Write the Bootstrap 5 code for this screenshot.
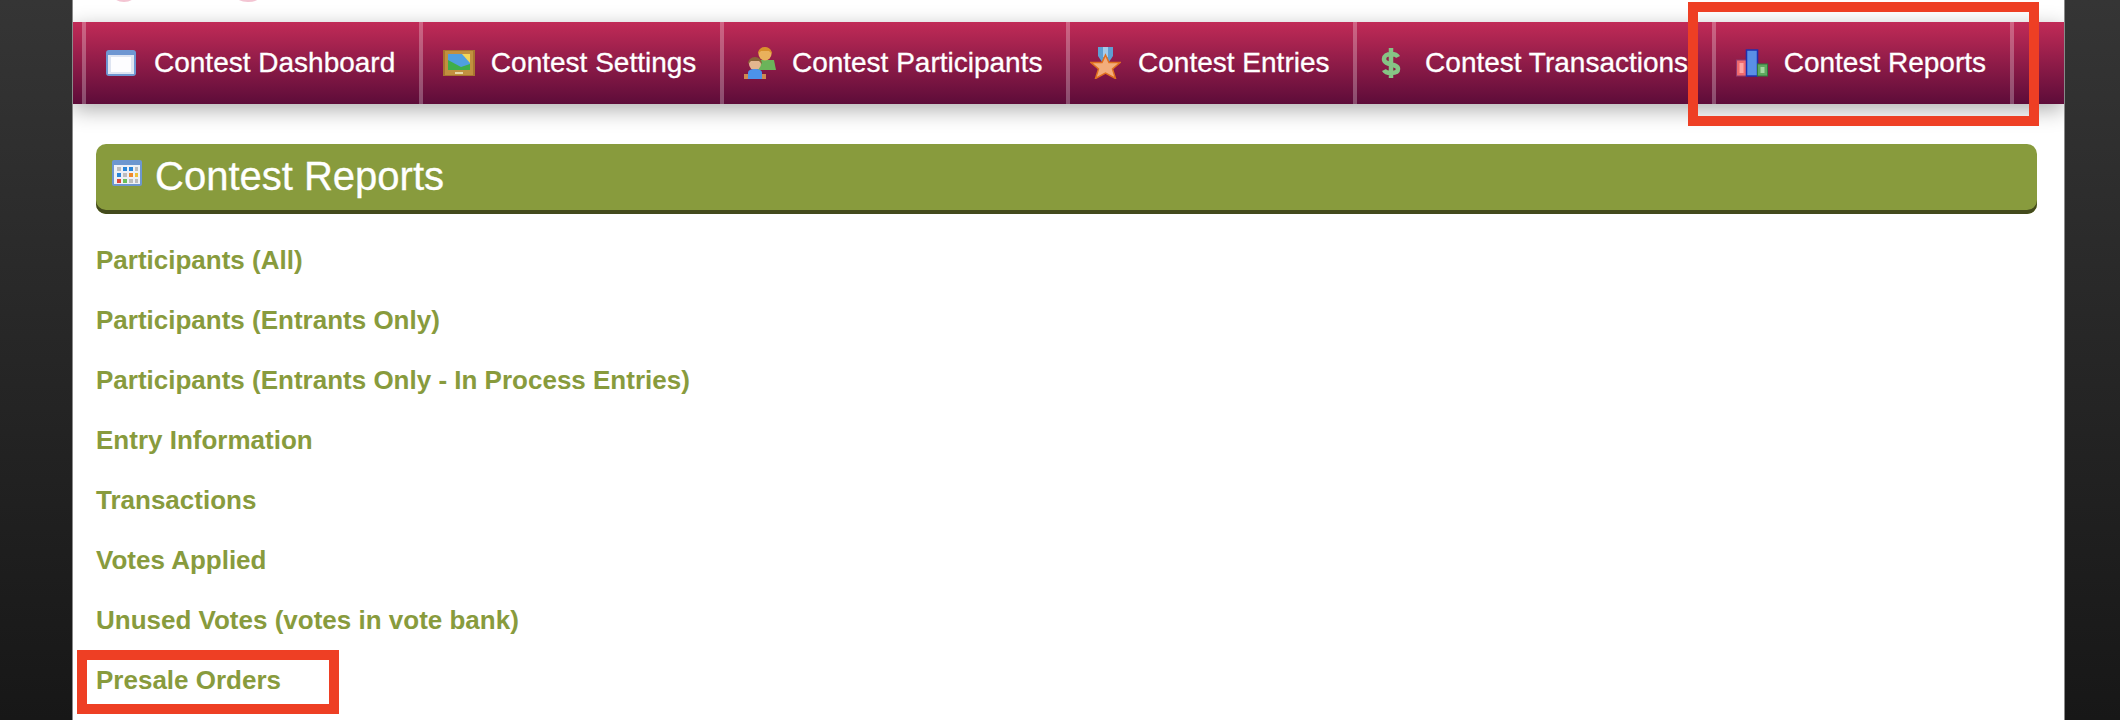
<!DOCTYPE html>
<html lang="en">
<head>
<meta charset="utf-8">
<title>Contest Reports</title>
<link href="https://cdn.jsdelivr.net/npm/bootstrap@5.3.0/dist/css/bootstrap.min.css" rel="stylesheet">
<style>
html,body{height:720px;overflow:hidden}
body{background:linear-gradient(#353535,#171717);font-family:"Liberation Sans",Arial,sans-serif;position:relative}
.sheet{margin-left:72px;width:1993px;height:720px;background:#fff;border-left:1px solid #8a8a8a;border-right:1px solid #8a8a8a;position:relative;overflow:hidden}
.logo-bit{position:absolute;top:-11px;height:13px;border-radius:50%;border:2px solid #f3c4d2;background:#fbe6ec}
.logo-a{left:40px;width:22px}
.logo-b{left:162px;width:26px}
.topband{height:22px}
.mainbar{height:82px;padding-left:9px;background:linear-gradient(#c12b57,#5d0c39);box-shadow:0 6px 20px rgba(0,0,0,.32)}
.mainbar-item{border-left:4px solid rgba(255,255,255,.27);padding:0 23.6px 0 20px;color:#fff;font-size:28px;white-space:nowrap;text-decoration:none;-webkit-text-stroke:.3px #fff}
.mainbar-item:last-child{border-right:4px solid rgba(255,255,255,.27)}
.mainbar-item:hover{color:#fff}
.ico-slot{width:48px;flex:none;display:flex;align-items:center}
.pagehead{margin:40px 27px 0 23px;height:70px;padding-bottom:4px;background:#889b3d;border-radius:10px;box-shadow:inset 0 -4px 0 #434a1c;color:#fff}
.pagehead h1{font-size:40px;font-weight:400;margin:0;line-height:64px;-webkit-text-stroke:.3px #fff}
.head-ico{margin:16px 13px 0 16px;flex:none}
.rep-links{margin:0 0 0 23px;padding:16px 0 0;list-style:none}
.rep-links li{height:60px;line-height:60px}
.rep-links a{color:#889b3d;font-weight:700;font-size:26px;text-decoration:none}
.callout{position:absolute;border:10px solid #ee3f24;pointer-events:none}
.callout-nav{left:1615px;top:2px;width:351px;height:124px}
.callout-list{left:4px;top:650px;width:262px;height:64px}
</style>
</head>
<body>
<div class="sheet">
  <span class="logo-bit logo-a"></span><span class="logo-bit logo-b"></span>
  <div class="topband"></div>
  <nav class="mainbar d-flex">
    <a class="mainbar-item d-flex align-items-center" href="#"><span class="ico-slot"><svg width="30" height="26" viewBox="0 0 30 26"><rect width="30" height="26" rx="3" fill="#6f97d2"/><rect x="2" y="5" width="26" height="19" fill="#dfe5f2"/><rect x="5" y="7" width="20" height="15" fill="#fdfdff"/></svg></span>Contest Dashboard</a>
    <a class="mainbar-item d-flex align-items-center" href="#"><span class="ico-slot"><svg width="32" height="26" viewBox="0 0 32 26"><rect width="32" height="26" fill="#a9752f"/><rect x="2" y="1" width="28" height="24" fill="#c2903f"/><rect x="5" y="4" width="22" height="16" fill="#4f9fe0"/><path d="M19 4h8v9z" fill="#f2d65a"/><path d="M5 10l13 7 9-3v6H5z" fill="#3fae4a"/><rect x="12" y="22" width="8" height="2" fill="#e8d8a8"/></svg></span>Contest Settings</a>
    <a class="mainbar-item d-flex align-items-center" href="#"><span class="ico-slot"><svg width="32" height="32" viewBox="0 0 32 32"><path d="M14 13h16l2 10H14z" fill="#6bb45a"/><circle cx="21" cy="7" r="6.500" fill="#e9b15c"/><path d="M14 7c0-4 3-7 7-7s7 3 7 7l-3-3h-8z" fill="#d8902c"/><circle cx="11" cy="17" r="6" fill="#e3b68f"/><path d="M4 17c0-4 3-7 7-7s7 3 7 7l-3-3H7z" fill="#8a6238"/><path d="M4 26c0-3 3-4 7-4s7 1 7 4v6H4z" fill="#4c93ea"/><rect x="0" y="27" width="4" height="5" fill="#cf8a50"/><rect x="18" y="27" width="4" height="5" fill="#cf8a50"/></svg></span>Contest Participants</a>
    <a class="mainbar-item d-flex align-items-center" href="#"><span class="ico-slot"><svg width="31" height="32" viewBox="0 0 31 32"><path d="M8 0h15v9l-4 6h-7l-4-6z" fill="#5f9fd2"/><rect x="13" y="0" width="5" height="10" fill="#a4cbe8"/><path d="M15.500 8l3.500 7.500H30l-7.500 6.500 3 9.500-10-5.500-10 5.500 3-9.500L1 15.500h11z" fill="#f3ad7c" stroke="#e0701f" stroke-width="1.500"/></svg></span>Contest Entries</a>
    <a class="mainbar-item d-flex align-items-center" href="#"><span class="ico-slot"><svg class="ms-1" width="20" height="32" viewBox="0 0 20 32"><path d="M17 10c-1-2-4-3-7-3-4 0-7 2-7 5 0 7 14 4 14 10 0 3-3 4-7 4-3 0-6-1-7-3M10 1v30" fill="none" stroke="#86c485" stroke-width="4.500"/></svg></span>Contest Transactions</a>
    <a class="mainbar-item d-flex align-items-center" href="#"><span class="ico-slot"><svg width="32" height="28" viewBox="0 0 32 28"><rect x=".5" y="11" width="10" height="16" fill="#f06a6e" stroke="#8f3a70"/><rect x="3.500" y="14" width="4" height="10" fill="#ffa3a3"/><rect x="10.500" y="1" width="11" height="26" fill="#5a8fe6" stroke="#1f2fb0" stroke-width="1.500"/><rect x="21.500" y="15" width="10" height="12" fill="#5fa85f" stroke="#2f7a3c"/><rect x="24.500" y="18" width="4" height="6" fill="#a5d6a0"/></svg></span>Contest Reports</a>
  </nav>
  <header class="pagehead d-flex align-items-start">
    <svg class="head-ico" width="30" height="26" viewBox="0 0 30 26"><rect width="30" height="26" rx="2" fill="#6d97cf"/><rect x="2" y="5" width="26" height="19" fill="#eef1f6"/><g fill="#bdbdbd"><rect x="5" y="7" width="4" height="4"/><rect x="23" y="7" width="3" height="4"/><rect x="11" y="13" width="4" height="4"/><rect x="17" y="19" width="4" height="4"/><rect x="23" y="19" width="3" height="4"/></g><g fill="#2a86d8"><rect x="11" y="7" width="4" height="4"/><rect x="17" y="7" width="4" height="4"/><rect x="5" y="13" width="4" height="4"/></g><rect x="17" y="13" width="4" height="4" fill="#ef8a2c"/><rect x="23" y="13" width="3" height="4" fill="#f0c23a"/><rect x="5" y="19" width="4" height="4" fill="#e0483a"/><rect x="11" y="19" width="4" height="4" fill="#6cbf5a"/></svg>
    <h1>Contest Reports</h1>
  </header>
  <ul class="rep-links">
    <li><a href="#">Participants (All)</a></li>
    <li><a href="#">Participants (Entrants Only)</a></li>
    <li><a href="#">Participants (Entrants Only - In Process Entries)</a></li>
    <li><a href="#">Entry Information</a></li>
    <li><a href="#">Transactions</a></li>
    <li><a href="#">Votes Applied</a></li>
    <li><a href="#">Unused Votes (votes in vote bank)</a></li>
    <li><a href="#">Presale Orders</a></li>
  </ul>
  <div class="callout callout-nav"></div>
  <div class="callout callout-list"></div>
</div>
</body>
</html>
